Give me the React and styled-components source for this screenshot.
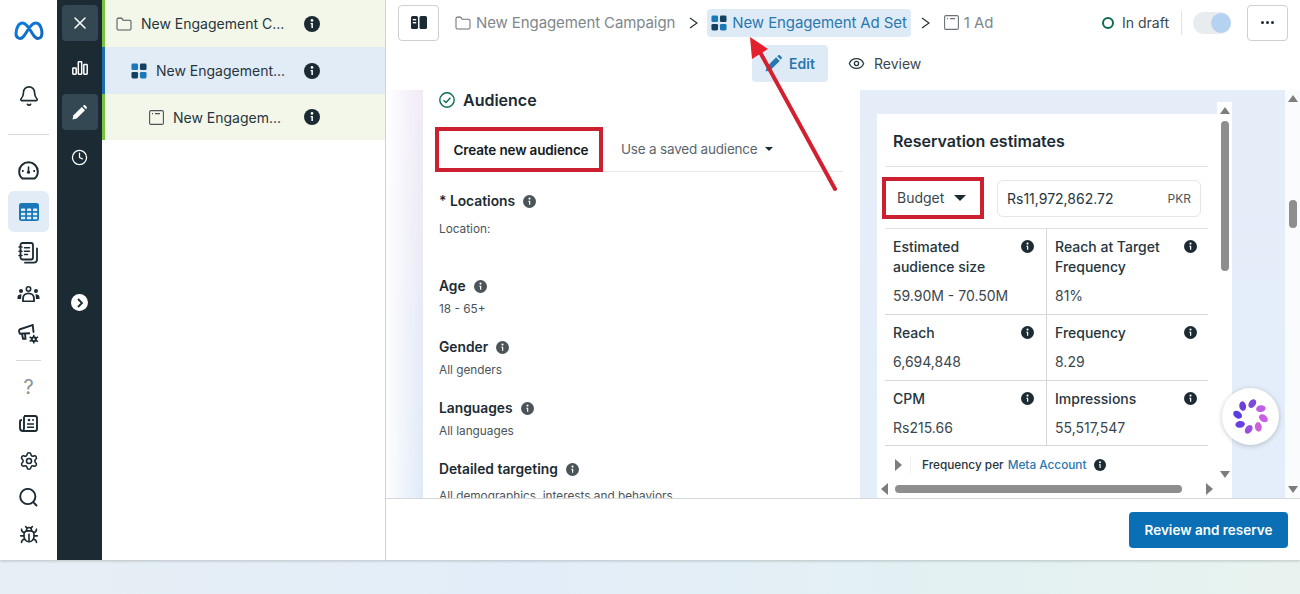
import React from "react";
import styled, { createGlobalStyle } from "styled-components";
import { Bell, Bug, Clock, Eye, Settings, X } from "lucide-react";

const Global = createGlobalStyle`
  html, body { margin: 0; padding: 0; }
  body { font-family: Inter, "Noto Sans", sans-serif; color: #1c2b33; overflow: hidden; }
  * { box-sizing: border-box; }
`;

const Page = styled.div`
  position: relative;
  width: 1300px;
  height: 594px;
  overflow: hidden;
  background: linear-gradient(90deg, #e6eff4 0%, #e3edf9 40%, #e3f1f2 75%, #e8f3ef 100%);
`;

const Shell = styled.div`
  display: flex;
  height: 560px;
  background: #fff;
  box-shadow: 0 1px 3px rgba(0, 0, 0, 0.2);
`;

/* left icon nav */
const SideNav = styled.nav`
  width: 57px;
  flex: none;
  display: flex;
  flex-direction: column;
  align-items: center;
  background: #fff;
`;

const NavSlot = styled.div`
  width: 41px;
  height: ${(p) => p.$h || 41}px;
  flex: none;
  display: flex;
  align-items: center;
  justify-content: center;
  border-radius: 6px;
  background: ${(p) => (p.$active ? "#e1ecf7" : "transparent")};
`;

const NavRule = styled.div`
  flex: none;
  height: 1px;
  width: ${(p) => p.$w}px;
  margin: ${(p) => p.$m};
  background: #d4d7da;
`;

const HelpMark = styled.span`
  font-size: 20px;
  line-height: 1;
  color: #8d9296;
`;

/* dark rail */
const Rail = styled.div`
  width: 45px;
  flex: none;
  display: flex;
  flex-direction: column;
  align-items: center;
  padding-top: 5px;
  background: #1c2b33;
`;

const RailButton = styled.div`
  width: 36px;
  height: ${(p) => p.$h || 36}px;
  flex: none;
  display: flex;
  align-items: center;
  justify-content: center;
  border-radius: 4px;
  color: #fff;
  background: ${(p) => (p.$on ? "#344854" : "transparent")};
`;

const RailExpand = styled.div`
  width: 17px;
  height: 17px;
  margin-top: 110px;
  display: flex;
  align-items: center;
  justify-content: center;
  border-radius: 50%;
  background: #fff;
`;

/* campaign tree */
const Tree = styled.div`
  width: 284px;
  flex: none;
  border-right: 1px solid #cfd3d6;
`;

const TreeRow = styled.div`
  height: ${(p) => p.$h || 47}px;
  display: flex;
  align-items: center;
  padding-left: ${(p) => p.$indent}px;
  border-left: 3px solid ${(p) => (p.$selected ? "#1a6fae" : "#7ac142")};
  background: ${(p) => (p.$selected ? "#e1ecf7" : "#f2f7ea")};
`;

const TreeIcon = styled.span`
  display: flex;
  flex: none;
  margin-right: 9px;
`;

const TreeLabel = styled.span`
  flex: 1;
  font-size: 14px;
  white-space: nowrap;
  color: #27353d;
`;

const TreeInfo = styled.span`
  display: flex;
  flex: none;
  width: 81px;
`;

/* main */
const Main = styled.main`
  flex: 1;
  min-width: 0;
  display: flex;
  flex-direction: column;
`;

const TopBar = styled.div`
  height: 45px;
  flex: none;
  display: flex;
  align-items: center;
  padding: 0 12px;
`;

const SquareButton = styled.div`
  width: 41px;
  height: 36px;
  flex: none;
  display: flex;
  align-items: center;
  justify-content: center;
  border: 1px solid #cbd0d3;
  border-radius: 4px;
  background: #fff;
`;

const Crumb = styled.div`
  display: flex;
  align-items: center;
  gap: 5px;
  height: 28px;
  margin-left: ${(p) => p.$ml || 0}px;
  padding: ${(p) => (p.$current ? "0 4px" : "0")};
  border-radius: 4px;
  font-size: 15px;
  letter-spacing: -0.1px;
  white-space: nowrap;
  color: ${(p) => (p.$current ? "#2a78ae" : "#80878c")};
  background: ${(p) => (p.$current ? "#deebf7" : "transparent")};
`;

const CrumbArrow = styled.span`
  display: flex;
  flex: none;
  width: ${(p) => p.$w}px;
  justify-content: center;
  padding: 0 ${(p) => p.$right || 0}px 0 ${(p) => p.$left || 0}px;
`;

const Status = styled.div`
  display: flex;
  align-items: center;
  gap: 8px;
  margin-left: auto;
  font-size: 14px;
  color: #3b474e;
`;

const StatusRing = styled.span`
  width: 12px;
  height: 12px;
  border: 2px solid #0c6b58;
  border-radius: 50%;
`;

const VRule = styled.span`
  width: 1px;
  height: 24px;
  margin: 0 11px 0 4px;
  background: #dfe2e4;
`;

const Toggle = styled.div`
  position: relative;
  width: 38px;
  height: 22px;
  margin-right: 16px;
  border-radius: 11px;
  background: #e9ecef;
`;

const ToggleKnob = styled.span`
  position: absolute;
  top: 1px;
  right: 0;
  width: 20px;
  height: 20px;
  border-radius: 50%;
  background: #b5d3f0;
`;

const Tabs = styled.div`
  height: 45px;
  flex: none;
  display: flex;
  align-items: flex-start;
  padding-left: 366px;
`;

const Tab = styled.div`
  height: 37px;
  width: ${(p) => p.$w}px;
  display: flex;
  align-items: center;
  gap: ${(p) => (p.$on ? 7 : 9)}px;
  padding-left: ${(p) => (p.$on ? 13 : 20)}px;
  border-radius: 4px;
  font-size: 14px;
  font-weight: ${(p) => (p.$on ? 600 : 400)};
  color: ${(p) => (p.$on ? "#2a78ae" : "#3b474e")};
  background: ${(p) => (p.$on ? "#deebf7" : "transparent")};
`;

const Content = styled.div`
  flex: 1;
  min-height: 0;
  display: flex;
  overflow: hidden;
  padding-left: 37px;
  background: linear-gradient(90deg, rgba(255, 255, 255, 0.95) 0%, rgba(255, 255, 255, 0) 100%) 0 0 / 37px 100% no-repeat,
    linear-gradient(180deg, #f1eaf6 0%, #dfeaf8 100%);
`;

/* audience form */
const FormCard = styled.section`
  width: 437px;
  flex: none;
  padding: 0 16px;
  background: #fff;
`;

const FormTitle = styled.h2`
  display: flex;
  align-items: center;
  gap: 8px;
  height: 37px;
  margin: 0;
  padding-bottom: 17px;
  font-size: 16px;
  font-weight: 600;
`;

const AudienceTabs = styled.div`
  display: flex;
  align-items: center;
  width: 408px;
  margin-left: -4px;
  border-bottom: 1px solid #e6e8ea;
`;

const RedBox = styled.div`
  display: flex;
  align-items: center;
  border: 4px solid #cc1f30;
  flex: none;
`;

const AudienceNew = styled(RedBox)`
  width: 168px;
  height: 45px;
  justify-content: center;
  padding-left: 4px;
  font-size: 13.5px;
  font-weight: 600;
  letter-spacing: -0.15px;
  color: #14191c;
  margin-bottom: -1px;
`;

const AudienceSaved = styled.div`
  display: flex;
  align-items: center;
  gap: 7px;
  margin-left: 18px;
  font-size: 13.5px;
  letter-spacing: -0.2px;
  color: #5b666c;
`;

const Field = styled.div`
  height: ${(p) => p.$h}px;
  padding-top: ${(p) => p.$top || 0}px;
`;

const FieldLabel = styled.div`
  display: flex;
  align-items: center;
  gap: 8px;
  height: 20px;
  font-size: 13.8px;
  font-weight: 600;
  color: #1c2b33;
`;

const FieldValue = styled.div`
  margin-top: ${(p) => p.$gap || 5}px;
  font-size: 11.8px;
  line-height: 16px;
  white-space: nowrap;
  color: #4b5459;
`;

/* estimates pane */
const EstimatesPane = styled.div`
  width: 425px;
  flex: none;
  display: flex;
  padding-left: 17px;
  background: linear-gradient(180deg, #e5edf8 0%, #e3eefa 100%);
`;

const EstimatesCard = styled.section`
  width: 340px;
  flex: none;
  margin-top: 24px;
  padding: 0 9px 0 8px;
  display: flex;
  flex-direction: column;
  background: #fff;
`;

const CardTitle = styled.h3`
  height: 53px;
  flex: none;
  display: flex;
  align-items: center;
  margin: 0;
  padding: 2px 0 0 8px;
  border-bottom: 1px solid #dfe2e4;
  font-size: 16px;
  font-weight: 600;
`;

const BudgetRow = styled.div`
  height: 62px;
  flex: none;
  display: flex;
  align-items: center;
  border-bottom: 1px solid #dfe2e4;
`;

const BudgetSelect = styled(RedBox)`
  width: 102px;
  height: 42px;
  margin-left: -3px;
  padding-left: 11px;
  gap: 10px;
  font-size: 14px;
  color: #3b474e;
`;

const AmountInput = styled.div`
  width: 204px;
  height: 37px;
  margin: 2px 0 0 13px;
  display: flex;
  align-items: center;
  justify-content: space-between;
  padding: 0 9px;
  border: 1px solid #e4e6eb;
  border-radius: 6px;
  font-size: 14px;
  color: #27353d;
`;

const Pkr = styled.span`
  font-size: 12px;
  color: #4b5459;
`;

const Metrics = styled.div`
  flex: none;
  display: grid;
  grid-template-columns: 162px 161px;
  grid-template-rows: 86px 66px 65px;
`;

const Metric = styled.div`
  position: relative;
  padding: 8px 34px 0 8px;
  border-bottom: 1px solid #d5d8da;
  border-right: ${(p) => (p.$last ? "none" : "1px solid #d5d8da")};
`;

const MetricInfo = styled.span`
  position: absolute;
  top: 11px;
  right: ${(p) => (p.$last ? 11 : 12)}px;
  display: flex;
`;

const MetricName = styled.div`
  font-size: 14px;
  font-weight: 500;
  line-height: 20px;
  color: #27353d;
`;

const MetricValue = styled.div`
  margin-top: 8.5px;
  font-size: 14px;
  line-height: 20px;
  color: #3b474e;
`;

const Breakdown = styled.div`
  height: 36px;
  flex: none;
  display: flex;
  align-items: center;
  padding: 1px 0 0 10px;
  font-size: 11.8px;
  font-weight: 500;
  color: #27353d;
`;

const BreakdownDivider = styled.span`
  width: 1px;
  height: 16px;
  margin: 0 11px 0 8px;
  background: #eceef0;
`;

const Link = styled.span`
  margin-left: 4px;
  color: #2a78ae;
`;

const BreakdownInfo = styled.span`
  display: flex;
  margin-left: 8px;
`;

const HScroll = styled.div`
  height: 12px;
  flex: none;
  display: flex;
  align-items: center;
  margin-top: 1px;
  width: 332px;
  margin-left: -4px;
`;

const HThumb = styled.div`
  width: 287px;
  height: 8px;
  margin: 0 auto 0 7px;
  border-radius: 4px;
  background: #8e8e8e;
`;

const VScroll = styled.div`
  width: 15px;
  flex: none;
  margin-top: 12px;
  display: flex;
  flex-direction: column;
  align-items: center;
  padding: 5px 0 20px;
  background: #fff;
`;

const VThumb = styled.div`
  width: 8px;
  height: ${(p) => p.$h}px;
  margin-top: ${(p) => p.$top}px;
  margin-bottom: auto;
  border-radius: 4px;
  background: #8e8e8e;
`;

const OuterScroll = styled(VScroll)`
  margin-top: 0;
  padding: 5px 0 5px;
  background: #f9fbfc;
`;

const Arrowhead = styled.span`
  width: 0;
  height: 0;
  flex: none;
  border-style: solid;
  border-color: transparent;
  ${(p) => p.$dir === "up" && "border-width: 0 5.5px 7px; border-bottom-color: #7d7d7d;"}
  ${(p) => p.$dir === "down" && "border-width: 7px 5.5px 0; border-top-color: #7d7d7d;"}
  ${(p) => p.$dir === "left" && "border-width: 6px 7px 6px 0; border-right-color: #7d7d7d;"}
  ${(p) => p.$dir === "right" && "border-width: 6px 0 6px 7px; border-left-color: #7d7d7d;"}
`;

const Caret = styled.span`
  width: 0;
  height: 0;
  border-style: solid;
  border-width: ${(p) => p.$s + 1}px ${(p) => p.$s + 1}px 0;
  border-color: #1c2b33 transparent transparent;
`;

/* footer */
const Footer = styled.footer`
  height: 62px;
  flex: none;
  display: flex;
  align-items: center;
  justify-content: flex-end;
  padding-right: 12px;
  border-top: 1px solid #d5d8da;
`;

const PrimaryButton = styled.button`
  width: 159px;
  height: 36px;
  border: 0;
  border-radius: 4px;
  font: 600 13.5px Inter, sans-serif;
  color: #fff;
  background: #0a6fb5;
`;

/* overlays */
const AssistantBubble = styled.div`
  position: absolute;
  left: 1222px;
  top: 388px;
  width: 57px;
  height: 57px;
  display: flex;
  align-items: center;
  justify-content: center;
  border-radius: 50%;
  background: #fff;
  box-shadow: 0 1px 5px rgba(0, 0, 0, 0.22);
`;

const AnnotationArrow = styled.svg`
  position: absolute;
  left: 0;
  top: 0;
  pointer-events: none;
`;

const InfoIcon = ({ size = 16, color = "#1c2b33" }) => (
  <svg width={size} height={size} viewBox="0 0 16 16">
    <circle cx="8" cy="8" r="8" fill={color} />
    <circle cx="8" cy="4.4" r="1.3" fill="#fff" />
    <path d="M6.6 7h2.3v5H7.4V8.3h-.8z" fill="#fff" />
  </svg>
);

const FolderIcon = ({ color = "#4b5459" }) => (
  <svg width="16" height="14" viewBox="0 0 17 15" fill="none" stroke={color} strokeWidth="1.1">
    <path d="M1 3V12.6C1 13.4 1.6 14 2.4 14H14.6C15.4 14 16 13.4 16 12.6V4.8C16 4 15.4 3.4 14.6 3.4H7.6L5.9 1.2H2.4C1.6 1.2 1 1.9 1 2.8Z" />
  </svg>
);

const AdSetIcon = () => (
  <svg width="16" height="16" viewBox="0 0 17 17">
    <rect x="0.5" y="0.5" width="7" height="7" rx="1.5" fill="#1a78b8" />
    <rect x="9.5" y="0.5" width="7" height="7" rx="1.5" fill="#16405f" />
    <rect x="0.5" y="9.5" width="7" height="7" rx="1.5" fill="#16405f" />
    <rect x="9.5" y="9.5" width="7" height="7" rx="1.5" fill="#1a78b8" />
  </svg>
);

const AdIcon = ({ color = "#4b5459" }) => (
  <svg width="15" height="15" viewBox="0 0 15 15" fill="none" stroke={color} strokeWidth="1.1">
    <rect x="0.6" y="0.6" width="13.8" height="13.8" rx="1.4" />
    <path d="M3 3.6h1M6 3.6h5" strokeWidth="1.3" />
  </svg>
);

const MetaLogo = () => (
  <svg width="30" height="20" viewBox="0 0 30 20" fill="none">
    <defs>
      <linearGradient id="metaStroke" x1="0" y1="0" x2="1" y2="1">
        <stop offset="0" stopColor="#0a7de3" />
        <stop offset="1" stopColor="#1466b8" />
      </linearGradient>
    </defs>
    <path
      d="M2 13C2 6.5 5 2 8.5 2C13 2 16 9 19 13.5C21 16.8 23.5 18 25.5 17C28 15.8 28.2 12 27.6 9C26.8 4.8 24.5 2 21.5 2C17 2 14 9 11 13.5C9 16.8 6.5 18 4.5 17C2.8 16.2 2 15 2 13Z"
      stroke="url(#metaStroke)"
      strokeWidth="3"
    />
  </svg>
);

const GaugeIcon = () => (
  <svg width="21" height="19" viewBox="0 0 21 19" fill="none" stroke="#1c2b33" strokeWidth="2">
    <path d="M4.6 17.6C2.4 16.2 1.2 13.6 1.2 10.4C1.2 5.4 5.3 1.2 10.5 1.2C15.7 1.2 19.8 5.4 19.8 10.4C19.8 13.6 18.6 16.2 16.4 17.6Z" />
    <path d="M10.5 6V10.5" strokeLinecap="round" strokeWidth="1.6" />
    <circle cx="10.5" cy="11.2" r="1.6" fill="#1c2b33" stroke="none" />
    <path d="M4 10H5.6M15.4 10H17" />
  </svg>
);

const TableIcon = () => (
  <svg width="20" height="18" viewBox="0 0 20 18">
    <rect width="20" height="18" rx="2.5" fill="#1a78b8" />
    {[5.5, 9.7, 13.7].map((y) =>
      [2, 8, 14].map((x) => <rect key={`${x}-${y}`} x={x} y={y} width="4.2" height="2.6" rx="0.4" fill="#e1ecf7" />)
    )}
  </svg>
);

const NotebookIcon = () => (
  <svg width="21" height="22" viewBox="0 0 21 22" fill="none" stroke="#1c2b33" strokeWidth="1.8" strokeLinecap="round">
    <rect x="2.5" y="1" width="12.5" height="16.5" rx="2" />
    <path d="M1 5H4M1 9.2H4M1 13.4H4M6.5 5.8H11.5M6.5 9.2H11.5M6.5 12.6H9.5" strokeWidth="1.5" />
    <path d="M19 6.5V17.5C19 19.5 17.8 20.7 15.8 20.7H7" />
  </svg>
);

const PeopleIcon = () => (
  <svg width="23" height="16" viewBox="0 0 23 16" fill="#1c2b33">
    <circle cx="11.5" cy="3" r="2.2" fill="none" stroke="#1c2b33" strokeWidth="1.6" />
    <circle cx="4" cy="5" r="2" />
    <circle cx="19" cy="5" r="2" />
    <path d="M6 15.5V12.5C6 9.5 8.4 7.3 11.5 7.3C14.6 7.3 17 9.5 17 12.5V15.5Z" fill="none" stroke="#1c2b33" strokeWidth="1.8" />
    <path d="M0.5 13V11.5C0.5 9.5 2 8.3 4.5 8.3L4 13ZM22.5 13V11.5C22.5 9.5 21 8.3 18.5 8.3L19 13Z" />
  </svg>
);

const CampaignIcon = () => (
  <svg width="21" height="21" viewBox="0 0 21 21" fill="none" stroke="#1c2b33" strokeWidth="1.9">
    <path d="M1.3 5.5L14.5 1.2M1.3 5.5C0.9 7 1.1 8.5 1.9 9.8L6 9.5L12 9.2" strokeLinejoin="round" />
    <path d="M14.7 0.8L15.5 8" strokeLinecap="round" />
    <path d="M4 10L5 14.8H7.5L7 9.6" />
    <circle cx="15.8" cy="15.2" r="3" fill="#1c2b33" stroke="none" />
    <path d="M15.8 10.8V19.6M11.6 13L20 17.6M11.6 17.4L20 13" strokeWidth="1.5" />
    <circle cx="15.8" cy="15.2" r="1" fill="#fff" stroke="none" />
  </svg>
);

const NewsIcon = () => (
  <svg width="19" height="17" viewBox="0 0 19 17" fill="none" stroke="#1c2b33" strokeWidth="1.9">
    <path d="M5 1H16C17.1 1 18 1.9 18 3V14C18 15.1 17.1 16 16 16H4C2.3 16 1 14.7 1 13V6.5C1 5.6 1.8 5 3 5" />
    <path d="M5 1.5V13C5 14.7 4.8 15.5 3.8 16" />
    <circle cx="10" cy="5" r="1.3" fill="#1c2b33" stroke="none" />
    <path d="M8 9H15M8 12.3H15" strokeWidth="1.6" />
    <path d="M13 5H15" strokeWidth="1.6" />
  </svg>
);

const SearchIcon = () => (
  <svg width="19" height="19" viewBox="0 0 19 19" fill="none" stroke="#1c2b33" strokeWidth="1.9">
    <circle cx="8.8" cy="8.5" r="7.6" />
    <path d="M14.5 14.3L17.5 17.5" strokeLinecap="round" />
  </svg>
);

const BarsIcon = () => (
  <svg width="16" height="14" viewBox="0 0 16 14" fill="none" stroke="#fff" strokeWidth="1.5">
    <rect x="0.8" y="7" width="3.4" height="6.2" rx="0.6" />
    <rect x="6.3" y="0.8" width="3.4" height="12.4" rx="0.6" />
    <rect x="11.8" y="3.6" width="3.4" height="9.6" rx="0.6" />
  </svg>
);

const PencilIcon = ({ color = "#fff", size = 15 }) => (
  <svg width={size} height={size} viewBox="0 0 15 15" fill={color}>
    <path d="M0.5 14.5L1.5 10.3L9.8 2L13 5.2L4.7 13.5Z" />
    <path d="M10.8 1L11.6 0.4C12.1 0 12.8 0 13.3 0.4L14.6 1.7C15 2.2 15 2.9 14.6 3.4L14 4.2Z" />
  </svg>
);

const ChevronIcon = () => (
  <svg width="8" height="10" viewBox="0 0 8 10" fill="none" stroke="#1c2b33" strokeWidth="1.8">
    <path d="M2 1L6 5L2 9" />
  </svg>
);

const PanelIcon = () => (
  <svg width="16" height="13" viewBox="0 0 16 13">
    <rect width="7" height="13" rx="1.5" fill="#1c2b33" />
    <rect x="1.8" y="3" width="3.4" height="1.4" fill="#fff" />
    <rect x="1.8" y="6" width="3.4" height="1.4" fill="#fff" />
    <rect x="8.5" width="7.5" height="13" rx="1.5" fill="#1c2b33" />
  </svg>
);

const GtIcon = () => (
  <svg width="9" height="12" viewBox="0 0 9 12" fill="none" stroke="#27353d" strokeWidth="1.3">
    <path d="M1 1L8 6L1 11" />
  </svg>
);

const CheckCircle = () => (
  <svg width="16" height="16" viewBox="0 0 16 16" fill="none" stroke="#0c6b58" strokeWidth="1.4">
    <circle cx="8" cy="8" r="7.2" />
    <path d="M4.6 8.2L7 10.5L11.4 5.8" />
  </svg>
);

const DotsIcon = () => (
  <svg width="13" height="3" viewBox="0 0 13 3" fill="#1c2b33">
    <circle cx="1.5" cy="1.5" r="1.5" />
    <circle cx="6.5" cy="1.5" r="1.5" />
    <circle cx="11.5" cy="1.5" r="1.5" />
  </svg>
);

const petals = [
  { a: 0, c: "#7a4bd8" },
  { a: 45, c: "#c05fe6" },
  { a: 90, c: "#c95fe6" },
  { a: 135, c: "#cc5fe0" },
  { a: 180, c: "#9c4fdf" },
  { a: 225, c: "#6a3fe0" },
  { a: 270, c: "#5a3de0" },
  { a: 315, c: "#6a3fdc" },
];

const FlowerIcon = () => (
  <svg width="37" height="37" viewBox="0 0 37 37">
    {petals.map((p) => (
      <ellipse
        key={p.a}
        cx="18.5"
        cy="5.5"
        rx="3.4"
        ry="4.8"
        fill={p.c}
        transform={`rotate(${p.a + 8} 18.5 18.5) rotate(28 18.5 5.5)`}
      />
    ))}
  </svg>
);

const fields = [
  { label: "* Locations", value: "Location:", h: 104, gap: 10, top: 19 },
  { label: "Age", value: "18 - 65+", h: 61 },
  { label: "Gender", value: "All genders", h: 61 },
  { label: "Languages", value: "All languages", h: 61 },
  { label: "Detailed targeting", value: "All demographics, interests and behaviors", h: 61, gap: 9 },
];

const metrics = [
  { name: ["Estimated", "audience size"], value: "59.90M - 70.50M" },
  { name: ["Reach at Target", "Frequency"], value: "81%", last: true },
  { name: ["Reach"], value: "6,694,848" },
  { name: ["Frequency"], value: "8.29", last: true },
  { name: ["CPM"], value: "Rs215.66" },
  { name: ["Impressions"], value: "55,517,547", last: true },
];

const App = () => (
  <Page>
    <Global />
    <Shell>
      <SideNav>
        <NavSlot $h={62}><MetaLogo /></NavSlot>
        <NavSlot $h={68}><Bell size={22} strokeWidth={1.8} color="#1c2b33" /></NavSlot>
        <NavRule $w={41} $m="4px 0 15px" />
        <NavSlot><GaugeIcon /></NavSlot>
        <NavSlot $active><TableIcon /></NavSlot>
        <NavSlot><NotebookIcon /></NavSlot>
        <NavSlot><PeopleIcon /></NavSlot>
        <NavSlot><CampaignIcon /></NavSlot>
        <NavRule $w={25} $m="5px 0 7px" />
        <NavSlot $h={37}><HelpMark>?</HelpMark></NavSlot>
        <NavSlot $h={37}><NewsIcon /></NavSlot>
        <NavSlot $h={37}><Settings size={20} strokeWidth={1.9} color="#1c2b33" /></NavSlot>
        <NavSlot $h={37}><SearchIcon /></NavSlot>
        <NavSlot $h={37}><Bug size={20} strokeWidth={1.9} color="#1c2b33" /></NavSlot>
      </SideNav>

      <Rail>
        <RailButton $on><X size={20} strokeWidth={1.8} /></RailButton>
        <RailButton $h={53}><BarsIcon /></RailButton>
        <RailButton $on><PencilIcon /></RailButton>
        <RailButton $h={54}><Clock size={17} strokeWidth={1.8} /></RailButton>
        <RailExpand><ChevronIcon /></RailExpand>
      </Rail>

      <Tree>
        <TreeRow $indent={11}>
          <TreeIcon><FolderIcon /></TreeIcon>
          <TreeLabel>New Engagement C...</TreeLabel>
          <TreeInfo><InfoIcon /></TreeInfo>
        </TreeRow>
        <TreeRow $indent={26} $selected>
          <TreeIcon><AdSetIcon /></TreeIcon>
          <TreeLabel>New Engagement...</TreeLabel>
          <TreeInfo><InfoIcon /></TreeInfo>
        </TreeRow>
        <TreeRow $indent={44} $h={46}>
          <TreeIcon><AdIcon /></TreeIcon>
          <TreeLabel>New Engagem...</TreeLabel>
          <TreeInfo><InfoIcon /></TreeInfo>
        </TreeRow>
      </Tree>

      <Main>
        <TopBar>
          <SquareButton><PanelIcon /></SquareButton>
          <Crumb $ml={16}><FolderIcon color="#6b7378" />New Engagement Campaign</Crumb>
          <CrumbArrow $w={32} $left={4}><GtIcon /></CrumbArrow>
          <Crumb $current><AdSetIcon />New Engagement Ad Set</Crumb>
          <CrumbArrow $w={33} $right={4}><GtIcon /></CrumbArrow>
          <Crumb><AdIcon color="#6b7378" />1 Ad</Crumb>
          <Status>
            <StatusRing />
            In draft
            <VRule />
          </Status>
          <Toggle><ToggleKnob /></Toggle>
          <SquareButton><DotsIcon /></SquareButton>
        </TopBar>

        <Tabs>
          <Tab $on $w={76}><PencilIcon color="#2a78ae" size={17} />Edit</Tab>
          <Tab $w={170}><Eye size={17} strokeWidth={1.8} color="#27353d" />Review</Tab>
        </Tabs>

        <Content>
          <FormCard>
            <FormTitle><CheckCircle />Audience</FormTitle>
            <AudienceTabs>
              <AudienceNew>Create new audience</AudienceNew>
              <AudienceSaved>Use a saved audience <Caret $s={3} /></AudienceSaved>
            </AudienceTabs>
            {fields.map((f) => (
              <Field key={f.label} $h={f.h} $top={f.top}>
                <FieldLabel>{f.label}<InfoIcon size={13} color="#4b5459" /></FieldLabel>
                <FieldValue $gap={f.gap}>{f.value}</FieldValue>
              </Field>
            ))}
          </FormCard>

          <EstimatesPane>
            <EstimatesCard>
              <CardTitle>Reservation estimates</CardTitle>
              <BudgetRow>
                <BudgetSelect>Budget <Caret $s={5} /></BudgetSelect>
                <AmountInput>Rs11,972,862.72<Pkr>PKR</Pkr></AmountInput>
              </BudgetRow>
              <Metrics>
                {metrics.map((m) => (
                  <Metric key={m.value} $last={m.last}>
                    <MetricName>
                      {m.name.map((line) => <div key={line}>{line}</div>)}
                    </MetricName>
                    <MetricInfo $last={m.last}><InfoIcon size={13} /></MetricInfo>
                    <MetricValue>{m.value}</MetricValue>
                  </Metric>
                ))}
              </Metrics>
              <Breakdown>
                <Arrowhead $dir="right" />
                <BreakdownDivider />
                Frequency per <Link>Meta Account</Link>
                <BreakdownInfo><InfoIcon size={12} /></BreakdownInfo>
              </Breakdown>
              <HScroll>
                <Arrowhead $dir="left" />
                <HThumb />
                <Arrowhead $dir="right" />
              </HScroll>
            </EstimatesCard>
            <VScroll>
              <Arrowhead $dir="up" />
              <VThumb $top={7} $h={150} />
              <Arrowhead $dir="down" />
            </VScroll>
          </EstimatesPane>

          <OuterScroll>
            <Arrowhead $dir="up" />
            <VThumb $top={98} $h={28} />
            <Arrowhead $dir="down" />
          </OuterScroll>
        </Content>

        <Footer>
          <PrimaryButton>Review and reserve</PrimaryButton>
        </Footer>
      </Main>
    </Shell>

    <AssistantBubble><FlowerIcon /></AssistantBubble>

    <AnnotationArrow width="1300" height="594" viewBox="0 0 1300 594">
      <path d="M760 52L835 189" stroke="#d3202f" strokeWidth="4" fill="none" strokeLinecap="round" />
      <path d="M750 37L752 59L768 49Z" fill="#e3202c" />
    </AnnotationArrow>
  </Page>
);

export default App;
